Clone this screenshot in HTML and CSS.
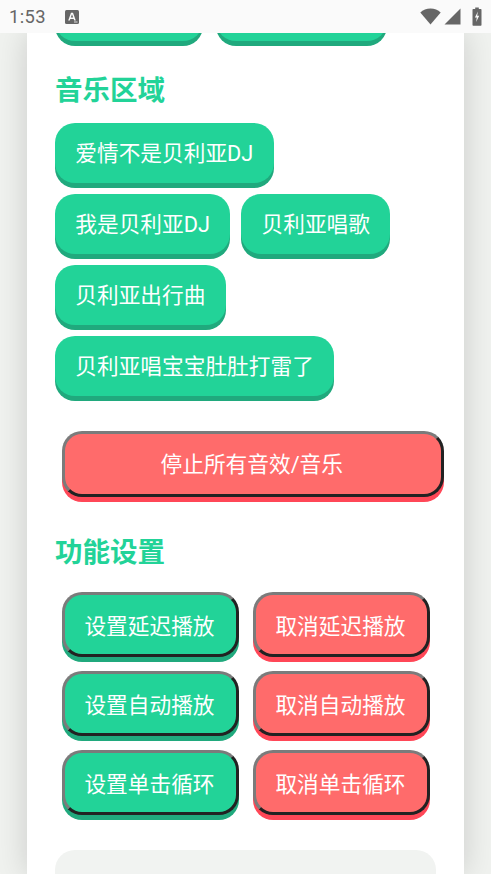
FILE: index.html
```html
<!DOCTYPE html>
<html lang="zh">

<head>
    <meta charset="UTF-8">
    <meta name="viewport" content="width=device-width, initial-scale=1.0">
    <title>贝利亚音效</title>
    <link rel="stylesheet" href="styles.css">
</head>

<body>

    <header class="status-bar">
        <span class="time">1:53</span>
        <svg class="icon-a" width="14" height="14" viewBox="0 0 14 14">
            <rect width="14" height="14" rx="1.5" fill="#666"/>
            <path d="M3.2 10.400 6 2.800h2L10.800 10.400H9.200L8.700 8.900H5.300L4.800 10.400zM5.800 7.500h2.400L7 4.300z" fill="#fafafa"/>
            <rect x="9" y="11.600" width="3.500" height="0.800" fill="#fafafa"/>
        </svg>
        <span class="status-icons">
            <svg width="21" height="17" viewBox="0 0 21 17">
                <path d="M0.300 4.600C3 2 6.500 0.600 10.500 0.600S18 2 20.700 4.600L10.500 16.600z" fill="#666"/>
            </svg>
            <svg width="17" height="17" viewBox="0 0 17 17">
                <path d="M0.500 16.500 16.500 0.500V16.500z" fill="#666"/>
            </svg>
            <svg width="10" height="19" viewBox="0 0 10 19">
                <path d="M3.200 0.500h3.600v1.600h2c.4 0 .7.3.7.7v15.200c0 .4-.3.7-.7.7H1.200c-.4 0-.7-.3-.7-.7V2.800c0-.4.3-.7.7-.7h2z" fill="#666"/>
                <path d="M5.900 4.600 2.900 10.600h1.900L4.100 15 7.200 8.700H5.200z" fill="#fafafa"/>
            </svg>
        </span>
    </header>

    <main class="page">
        <div class="card">
            <!-- row scrolled under the status bar -->
            <div class="cut-row">
                <div class="btn green cut-a"></div>
                <div class="btn green cut-b"></div>
            </div>

            <h2 class="title">音乐区域</h2>
            <div class="sound-list">
                <button class="btn green">爱情不是贝利亚DJ</button>
                <button class="btn green">我是贝利亚DJ</button>
                <button class="btn green">贝利亚唱歌</button>
                <button class="btn green">贝利亚出行曲</button>
                <button class="btn green">贝利亚唱宝宝肚肚打雷了</button>
            </div>

            <button class="ctrl red stop">停止所有音效/音乐</button>

            <h2 class="title settings-title">功能设置</h2>
            <div class="settings">
                <button class="ctrl green">设置延迟播放</button>
                <button class="ctrl red">取消延迟播放</button>
                <button class="ctrl green">设置自动播放</button>
                <button class="ctrl red">取消自动播放</button>
                <button class="ctrl green">设置单击循环</button>
                <button class="ctrl red">取消单击循环</button>
            </div>

            <div class="panel"></div>
        </div>
    </main>

</body>

</html>
```

FILE: styles.css
```css
body {
    margin: 0;
    padding: 0;
    height: 874px;
    overflow: hidden;
    background: #f0f2ef;
    font-family: Roboto, "Noto Sans CJK SC", sans-serif;
}

.status-bar {
    position: relative;
    height: 33px;
    display: flex;
    align-items: center;
    background: #fafafa;
    color: #666;
    padding: 0 9px 0 9px;
    box-sizing: border-box;
}

.time {
    font-size: 18.4px;
    letter-spacing: 0.4px;
}

.icon-a {
    margin-left: 19px;
}

.status-icons {
    margin-left: auto;
    display: flex;
    align-items: center;
    gap: 3px;
}

.status-icons svg:last-child {
    margin-left: 8px;
}

.page {
    height: 841px;
    overflow: hidden;
    padding: 0 27px;
}

.card {
    background: #fff;
    height: 841px;
    padding: 0 28px;
    box-shadow: 0 0 30px rgba(0, 0, 0, 0.16);
}

.cut-row {
    height: 8px;
    display: flex;
    align-items: flex-end;
    gap: 13px;
}

.cut-a {
    width: 148px;
    flex: none;
}

.cut-b {
    width: 171px;
    flex: none;
}

.title {
    margin: 33px 0 15px;
    font-size: 27.5px;
    line-height: 34px;
    font-weight: 700;
    color: #22d398;
}

.settings-title {
    margin: 39px 0 22px;
}

.sound-list {
    display: flex;
    flex-wrap: wrap;
    gap: 11.5px 11px;
}

.btn {
    box-sizing: border-box;
    height: 59.5px;
    padding: 0 20.3px 3px;
    border: 0;
    border-radius: 20px;
    font-family: inherit;
    font-size: 21.7px;
    color: #fff;
}

.ctrl {
    height: 65px;
    padding: 0 2px 0 0;
    border: 3px solid;
    border-color: #7b7b7b #222 #222 #7b7b7b;
    border-radius: 20px;
    font-family: inherit;
    font-size: 21.7px;
    color: #fff;
}

.green {
    background: #22d398;
    box-shadow: 0 5px 0 #20a97d;
}

.red {
    background: #ff6b6b;
    box-shadow: 0 5px 0 #ff4757;
}

.stop {
    display: block;
    width: 381.5px;
    height: 65.5px;
    margin: 35.5px 0 0 7px;
    padding-bottom: 3px;
}

.settings {
    display: grid;
    grid-template-columns: 177px 177px;
    gap: 14px;
    margin-left: 7px;
}

.panel {
    height: 120px;
    margin-top: 35px;
    background: #f1f3f1;
    border-radius: 20px;
}
```
